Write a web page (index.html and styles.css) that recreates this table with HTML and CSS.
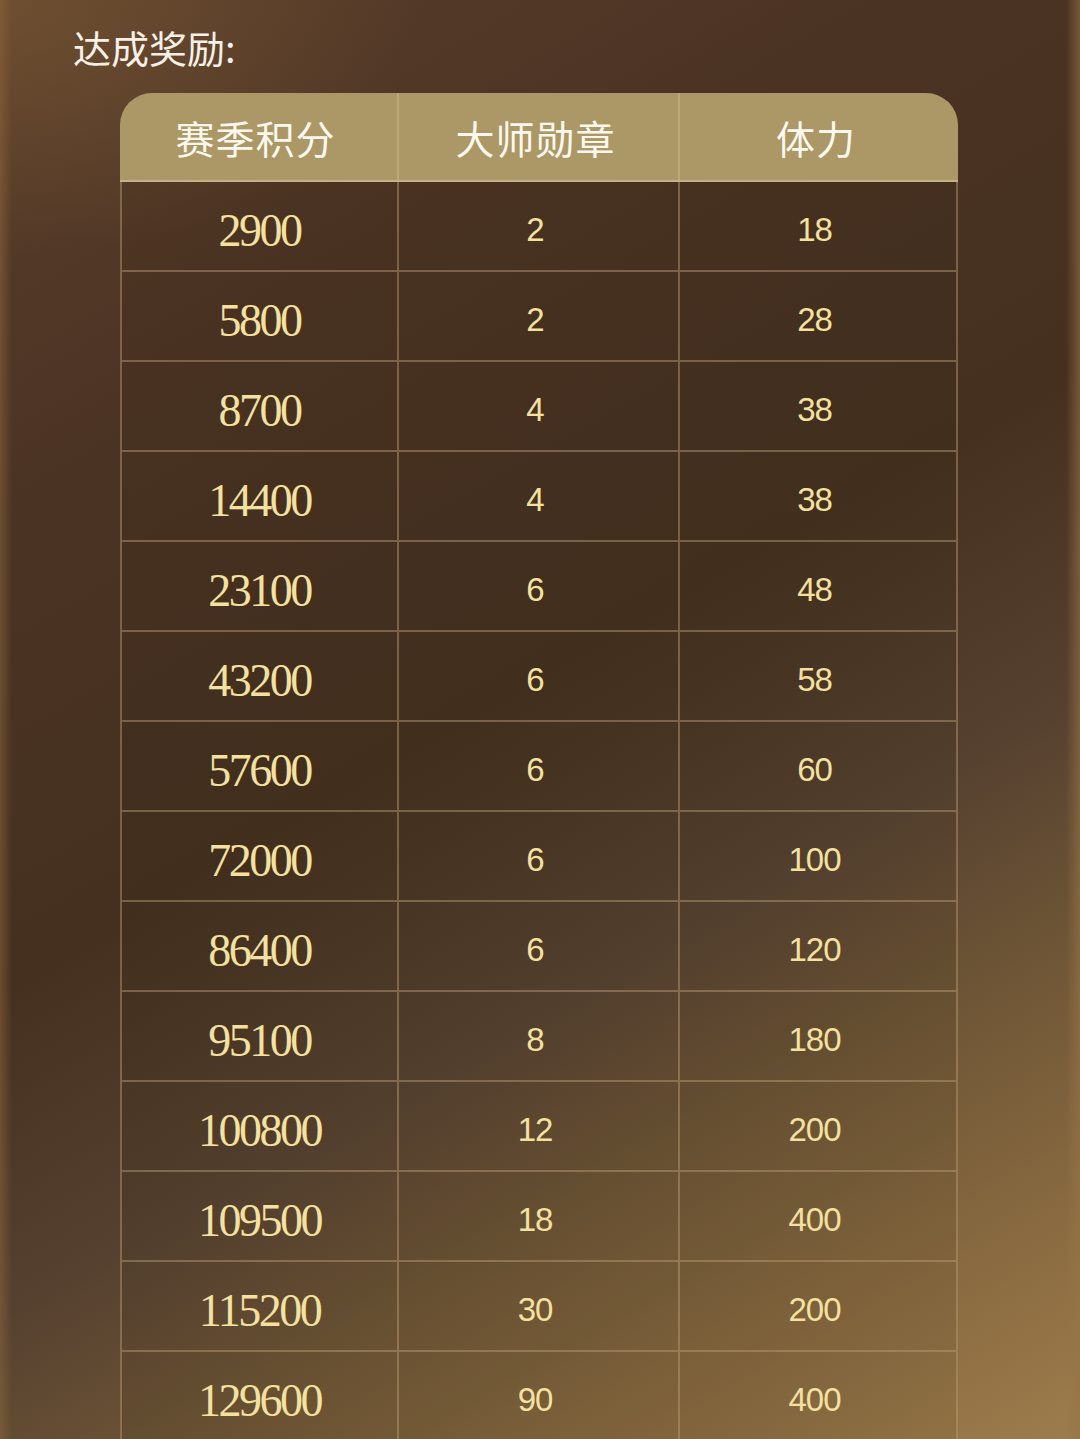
FILE: index.html
```html
<!DOCTYPE html>
<html lang="zh-CN">
<head>
<meta charset="utf-8">
<title>达成奖励</title>
<link rel="stylesheet" href="styles.css">
</head>
<body>
<div class="page">
  <h1 class="title">达成奖励:</h1>
  <div class="table">
    <div class="head">
      <div class="hcell">赛季积分</div>
      <div class="hcell">大师勋章</div>
      <div class="hcell">体力</div>
    </div>
    <div class="row"><div class="cell score">2900</div><div class="cell num">2</div><div class="cell num">18</div></div>
    <div class="row"><div class="cell score">5800</div><div class="cell num">2</div><div class="cell num">28</div></div>
    <div class="row"><div class="cell score">8700</div><div class="cell num">4</div><div class="cell num">38</div></div>
    <div class="row"><div class="cell score">14400</div><div class="cell num">4</div><div class="cell num">38</div></div>
    <div class="row"><div class="cell score">23100</div><div class="cell num">6</div><div class="cell num">48</div></div>
    <div class="row"><div class="cell score">43200</div><div class="cell num">6</div><div class="cell num">58</div></div>
    <div class="row"><div class="cell score">57600</div><div class="cell num">6</div><div class="cell num">60</div></div>
    <div class="row"><div class="cell score">72000</div><div class="cell num">6</div><div class="cell num">100</div></div>
    <div class="row"><div class="cell score">86400</div><div class="cell num">6</div><div class="cell num">120</div></div>
    <div class="row"><div class="cell score">95100</div><div class="cell num">8</div><div class="cell num">180</div></div>
    <div class="row"><div class="cell score">100800</div><div class="cell num">12</div><div class="cell num">200</div></div>
    <div class="row"><div class="cell score">109500</div><div class="cell num">18</div><div class="cell num">400</div></div>
    <div class="row"><div class="cell score">115200</div><div class="cell num">30</div><div class="cell num">200</div></div>
    <div class="row"><div class="cell score">129600</div><div class="cell num">90</div><div class="cell num">400</div></div>
  </div>
</div>
</body>
</html>
```
FILE: styles.css
```css
html, body {
  margin: 0;
  padding: 0;
}
body {
  width: 1080px;
  height: 1439px;
  overflow: hidden;
  background-color: #4c3524;
}
.page {
  width: 1080px;
  height: 1439px;
  overflow: hidden;
  background:
    linear-gradient(90deg, rgba(140,100,60,0.55) 0px, rgba(140,100,60,0) 12px, rgba(140,100,60,0) 1066px, rgba(150,115,70,0.6) 1080px),
    radial-gradient(ellipse 420px 260px at 0px 0px, rgba(130,95,55,0.5), rgba(130,95,55,0)),
    linear-gradient(150deg, #5a3e2a 0%, #4b3324 25%, #45301f 48%, #564130 64%, #6f5636 76%, #8a6b41 89%, #9d7d4c 100%);
  font-family: "Noto Sans CJK SC", "Noto Sans", sans-serif;
}
.title {
  margin: 0;
  padding: 28px 0 0 73px;
  font-size: 38px;
  line-height: 38px;
  font-weight: 400;
  color: #f6f0e6;
}
.table {
  margin: 27px 0 0 120px;
  width: 838px;
}
.head {
  display: grid;
  grid-template-columns: 279px 281px 278px;
  height: 87px;
  background: #ab9866;
  border-radius: 32px 32px 0 0;
  border-bottom: 2px solid #c3b187;
}
.hcell {
  display: flex;
  align-items: center;
  justify-content: center;
  padding-right: 6px;
  font-size: 39px;
  letter-spacing: 1px;
  color: #fdf8ee;
  border-right: 2px solid #bba97c;
}
.hcell:last-child {
  border-right: none;
}
.row {
  display: grid;
  grid-template-columns: 279px 281px 278px;
  height: 90px;
}
.cell {
  display: flex;
  align-items: center;
  justify-content: center;
  padding-top: 8px;
  box-sizing: border-box;
  border-right: 2px solid rgba(190,160,120,0.45);
  border-bottom: 2px solid rgba(190,160,120,0.45);
  background: rgba(20,10,0,0.06);
  color: #f4e09f;
}
.cell:first-child {
  border-left: 2px solid rgba(190,160,120,0.45);
}
.score {
  font-family: "Liberation Serif", "Times New Roman", serif;
  font-size: 46px;
  letter-spacing: -2.5px;
}
.num {
  padding-right: 7px;
  font-family: "Liberation Sans", Arial, sans-serif;
  font-size: 33px;
  letter-spacing: -1px;
}
```
